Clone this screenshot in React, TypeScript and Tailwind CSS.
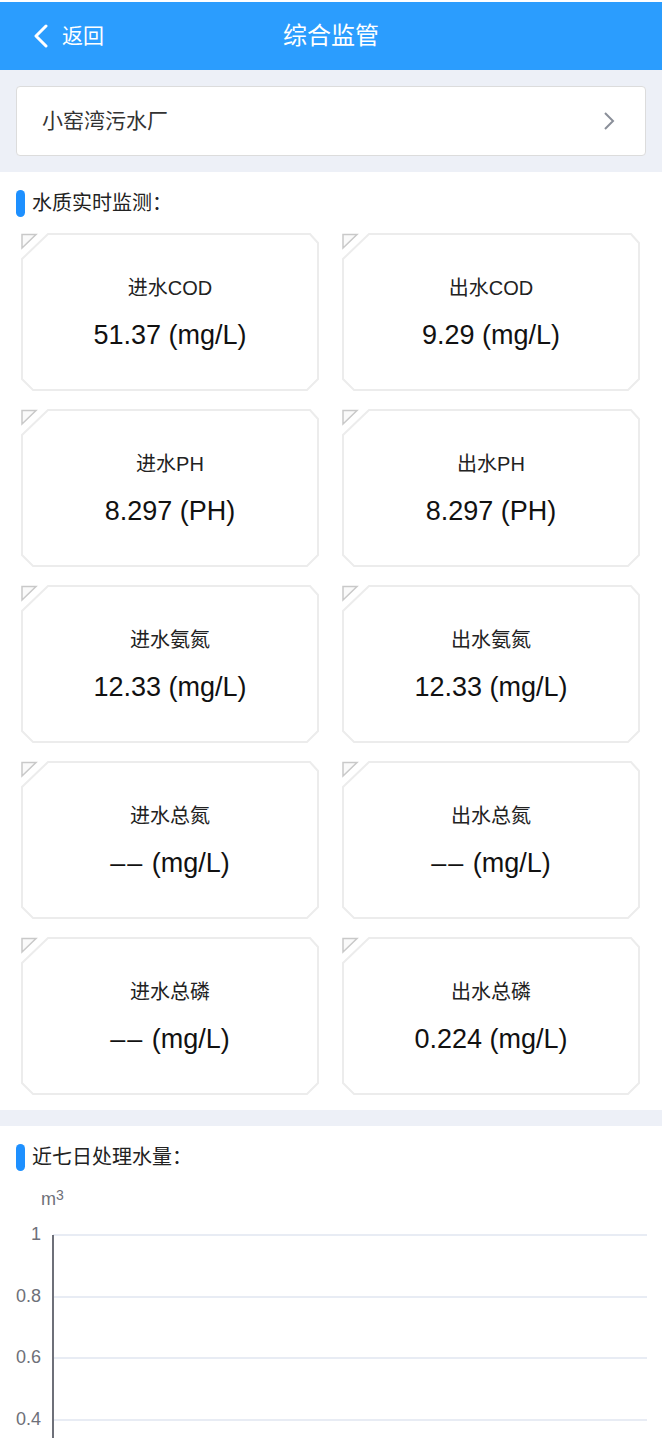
import React from "react";

const font = "font-['Liberation_Sans','Noto_Sans_CJK_SC',sans-serif]";

const items = [
  { label: "进水COD", value: "51.37 (mg/L)" },
  { label: "出水COD", value: "9.29 (mg/L)" },
  { label: "进水PH", value: "8.297 (PH)" },
  { label: "出水PH", value: "8.297 (PH)" },
  { label: "进水氨氮", value: "12.33 (mg/L)" },
  { label: "出水氨氮", value: "12.33 (mg/L)" },
  { label: "进水总氮", value: null },
  { label: "出水总氮", value: null },
  { label: "进水总磷", value: null },
  { label: "出水总磷", value: "0.224 (mg/L)" },
];

const SectionTitle = ({ text }: { text: string }) => (
  <div className="flex items-center gap-[7px] pl-4">
    <span className="w-[9px] h-[27px] rounded-full bg-[#1e90ff]" />
    <span className="text-[20px] leading-[28px] text-[#222]">{text}</span>
  </div>
);

const Card = ({ label, value }: { label: string; value: string | null }) => (
  <div className="relative h-[158px] flex flex-col items-center justify-center gap-[19px]">
    <svg className="absolute inset-0" width="298" height="158" viewBox="0 0 298 158">
      <polygon
        points="27,1 289,1 297,10 297,146 286,157 12,157 1,146 1,26"
        fill="#fff"
        stroke="#ececec"
        strokeWidth="2"
      />
      <polygon points="1,1.5 15,1.5 1,15" fill="#fafafa" stroke="#c9c9c9" strokeWidth="1.5" />
    </svg>
    <span className="relative text-[20px] leading-[26px] text-[#222]">{label}</span>
    <span className="relative text-[27px] leading-[30px] text-[#111]">
      {value ?? (
        <>
          <span className="tracking-[2px]">––</span> (mg/L)
        </>
      )}
    </span>
  </div>
);

const Chart = () => {
  const ys = [1234, 1296, 1357, 1419].map((y) => y - 1180);
  const labels = ["1", "0.8", "0.6", "0.4"];
  return (
    <svg width="662" height="258" viewBox="0 0 662 258" className="block">
      <text x="41" y="24" fontSize="18" fill="#6e7079" fontFamily="Liberation Sans, sans-serif">
        m
        <tspan fontSize="14" dy="-5">3</tspan>
      </text>
      {ys.map((y, i) => (
        <g key={i}>
          <line x1="53" x2="647" y1={y} y2={y} stroke="#e0e6f1" strokeWidth="1.5" />
          <text
            x="41"
            y={y + 5}
            textAnchor="end"
            fontSize="18"
            fill="#6e7079"
            fontFamily="Liberation Sans, sans-serif"
          >
            {labels[i]}
          </text>
        </g>
      ))}
      <line x1="53" x2="53" y1={ys[0]} y2="258" stroke="#6e7079" strokeWidth="2" />
    </svg>
  );
};

export default function App() {
  return (
    <div className={`w-[662px] min-h-[1438px] bg-white ${font}`}>
      <div className="h-[2px] bg-white" />
      <header className="relative h-[68px] bg-[#2b9dfe] flex items-center justify-center">
        <div className="absolute left-[33px] top-0 h-full flex items-center gap-[13px] text-white">
          <svg width="16" height="24" viewBox="0 0 16 24" fill="none">
            <path d="M13 2 L3 12 L13 22" stroke="#fff" strokeWidth="3" strokeLinecap="round" strokeLinejoin="round" />
          </svg>
          <span className="text-[21px]">返回</span>
        </div>
        <h1 className="text-[24px] text-white">综合监管</h1>
      </header>

      <div className="bg-[#edf0f7] px-4 py-4">
        <div className="h-[70px] bg-white border-[1.5px] border-[#dcdcdc] rounded-[4px] flex items-center justify-between pl-[25px] pr-[30px]">
          <span className="text-[21px] text-[#333]">小窑湾污水厂</span>
          <svg width="12" height="20" viewBox="0 0 12 20" fill="none">
            <path d="M2 2 L10 10 L2 18" stroke="#8a8f99" strokeWidth="2" />
          </svg>
        </div>
      </div>

      <section className="pt-[17px] pb-[15px]">
        <SectionTitle text="水质实时监测：" />
        <div className="grid grid-cols-[298px_298px] gap-x-[23px] gap-y-[18px] px-[21px] mt-[16px]">
          {items.map((it) => (
            <Card key={it.label} label={it.label} value={it.value} />
          ))}
        </div>
      </section>

      <div className="h-[16px] bg-[#edf0f7]" />

      <section className="pt-[17px]">
        <SectionTitle text="近七日处理水量：" />
        <div className="mt-[10px]">
          <Chart />
        </div>
      </section>
    </div>
  );
}
